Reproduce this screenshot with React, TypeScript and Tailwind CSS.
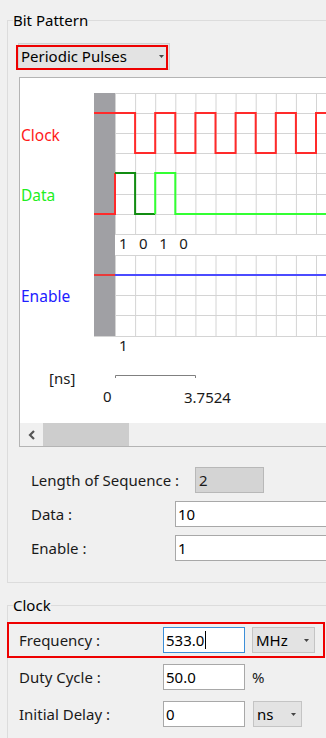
import React from "react";

const cols = Array.from({ length: 11 }, (_, i) => 115 + i * 20.1);
const rowsTop = [93, 113, 133, 153, 173, 194, 214, 234];
const rowsBottom = [255, 275, 295, 315, 336];

function clockPath() {
  let d = "M94 113 H" + cols[1].toFixed(1);
  let high = true;
  for (let i = 1; i < cols.length; i++) {
    high = !high;
    d += " V" + (high ? 113 : 153);
    d += " H" + (i + 1 < cols.length ? cols[i + 1].toFixed(1) : "326");
  }
  return d;
}

function ComboArrow() {
  return (
    <svg width="5" height="3" viewBox="0 0 5 3" className="shrink-0">
      <polygon points="0,0 5,0 2.5,3" fill="#444" />
    </svg>
  );
}

function WaveChart() {
  return (
    <svg width="306" height="345" viewBox="20 78 306 345" className="block bg-white">
      {/* grid */}
      {rowsTop.concat(rowsBottom).map((y) => (
        <line key={"h" + y} x1={94} x2={326} y1={y + 0.5} y2={y + 0.5} stroke="#d4d4d4" />
      ))}
      {cols.map((x) => (
        <g key={"v" + x}>
          <line x1={x + 0.5} x2={x + 0.5} y1={93} y2={234} stroke="#d4d4d4" />
          <line x1={x + 0.5} x2={x + 0.5} y1={255} y2={336} stroke="#d4d4d4" />
        </g>
      ))}
      <rect x={94} y={93} width={21} height={243} fill="#a0a0a4" />

      {/* signals */}
      <path d={clockPath()} fill="none" stroke="#ff2a2a" strokeWidth={2} />
      <path d="M94 214 H115 V173" fill="none" stroke="#ff2a2a" strokeWidth={2} />
      <path d="M115 173 H135.1 V214 H155.2" fill="none" stroke="#118c11" strokeWidth={2} />
      <path d="M155.2 214 V173 H175.3 V214 H326" fill="none" stroke="#33ff33" strokeWidth={2} />
      <path d="M94 275 H115" fill="none" stroke="#e83a3a" strokeWidth={2} />
      <path d="M115 275 H326" fill="none" stroke="#4b4bff" strokeWidth={2} />

      {/* labels */}
      <g fontFamily="'Noto Sans', sans-serif" fontSize="15.5">
        <text x={21} y={135} dominantBaseline="central" fill="#ff1a1a">Clock</text>
        <text x={21} y={195} dominantBaseline="central" fill="#22ee22">Data</text>
        <text x={21} y={296} dominantBaseline="central" fill="#2020ff">Enable</text>
      </g>
      <g fontFamily="'Noto Sans', sans-serif" fontSize="15" fill="#1a1a1a">
        {["1", "0", "1", "0"].map((b, i) => (
          <text key={i} x={cols[i] + 4} y={243} dominantBaseline="central">{b}</text>
        ))}
        <text x={119} y={345} dominantBaseline="central">1</text>
        <text x={49} y={378} dominantBaseline="central">[ns]</text>
        <text x={103} y={396} dominantBaseline="central">0</text>
        <text x={184} y={397} dominantBaseline="central">3.7524</text>
      </g>
      <path d="M115.5 378 V375.5 H195.5 V378" fill="none" stroke="#808080" />
    </svg>
  );
}

function TextBox({ value, className = "", focused = false }: { value: string; className?: string; focused?: boolean }) {
  return (
    <div
      className={
        "flex h-[26px] items-center bg-white pl-[2px] text-[15px] text-black border " +
        (focused ? "border-[#3c8fd8] " : "border-[#a8a8a8] ") +
        className
      }
    >
      {value}
      {focused && <span className="ml-px h-[18px] w-px bg-black" />}
    </div>
  );
}

function Combo({ value, className = "" }: { value: string; className?: string }) {
  return (
    <div
      className={
        "flex h-[26px] items-center justify-between border border-[#c4c4c4] bg-[#e3e3e3] pl-[3px] pr-[5px] text-[15px] text-black " +
        className
      }
    >
      <span>{value}</span>
      <ComboArrow />
    </div>
  );
}

export default function App() {
  return (
    <div className="h-[738px] w-[326px] overflow-hidden bg-[#f0f0f0] pl-[7px] pt-[10px] font-['Noto_Sans',sans-serif] text-[15px] text-[#1a1a1a]">
      {/* Bit Pattern group */}
      <fieldset className="w-[340px] border border-[#dcdcdc] pb-[21px]">
        <legend className="ml-[5px] h-[20px] px-0 text-[15px] leading-[20px] text-black">Bit Pattern</legend>

        <div className="relative ml-[10px] mt-[13px] h-[27px] w-[152px]">
          <div className="flex h-full w-full items-center justify-between border border-[#d0d0d0] bg-[#e3e3e3] pl-[2px] pr-[5px] text-[15px] text-black">
            <span>Periodic Pulses</span>
            <ComboArrow />
          </div>
          <span className="absolute left-[-2px] top-[2px] h-[25px] w-[152px] border-2 border-[#ee0000]" />
        </div>

        {/* chart panel */}
        <div className="ml-[11px] mt-[7px] w-[330px] border border-[#b4b4b4] bg-white">
          <WaveChart />
          <div className="flex h-[23px] bg-[#f0f0f0]">
            <div className="flex w-[23px] items-center justify-center">
              <svg width="8" height="10" viewBox="0 0 8 10">
                <path d="M6 1 L2 5 L6 9" fill="none" stroke="#555" strokeWidth="2.2" />
              </svg>
            </div>
            <div className="h-full w-[86px] bg-[#cdcdcd]" />
          </div>
        </div>

        <div className="ml-[23px] mt-[20px] flex flex-col gap-[8px]">
          <div className="flex h-[26px] items-center">
            <span className="w-[164px] whitespace-nowrap">Length of Sequence :</span>
            <div className="flex h-[26px] w-[69px] items-center border border-[#b8b8b8] bg-[#d4d4d4] pl-[3px]">2</div>
          </div>
          <div className="flex h-[26px] items-center">
            <span className="w-[144px]">Data :</span>
            <TextBox value="10" className="w-[160px]" />
          </div>
          <div className="flex h-[26px] items-center">
            <span className="w-[144px]">Enable :</span>
            <TextBox value="1" className="w-[160px]" />
          </div>
        </div>
      </fieldset>

      {/* Clock group */}
      <fieldset className="mt-[12px] h-[200px] w-[340px] border border-[#dcdcdc]">
        <legend className="ml-[5px] h-[20px] px-0 text-[15px] leading-[20px] text-black">Clock</legend>

        <div className="-ml-[1px] mt-[7px] flex h-[36px] w-[318px] items-center border-2 border-[#ee0000] pl-[10px]">
          <span className="w-[144px]">Frequency :</span>
          <TextBox value="533.0" focused className="w-[82px]" />
          <Combo value="MHz" className="ml-[7px] w-[63px]" />
        </div>

        <div className="ml-[11px] mt-[6px] flex h-[26px] items-center">
          <span className="w-[144px]">Duty Cycle :</span>
          <TextBox value="50.0" className="w-[82px]" />
          <span className="ml-[7px]">%</span>
        </div>

        <div className="ml-[11px] mt-[11px] flex h-[26px] items-center">
          <span className="w-[144px]">Initial Delay :</span>
          <TextBox value="0" className="w-[82px]" />
          <Combo value="ns" className="ml-[8px] w-[49px]" />
        </div>
      </fieldset>
    </div>
  );
}
